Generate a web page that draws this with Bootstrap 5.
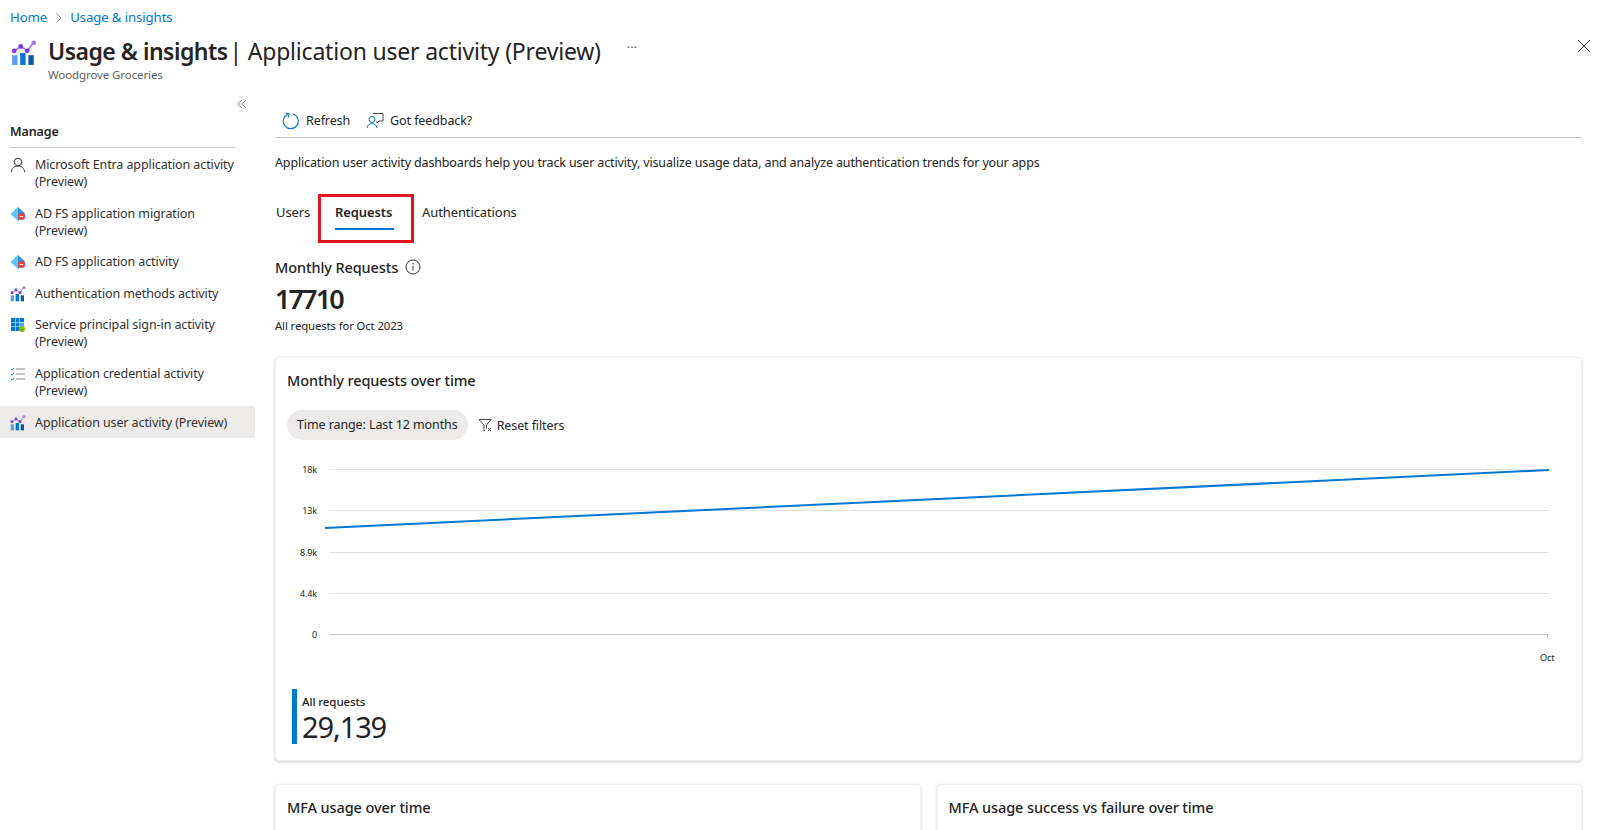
<!DOCTYPE html>
<html lang="en">
<head>
<meta charset="utf-8">
<title>Application user activity</title>
<link href="https://cdn.jsdelivr.net/npm/bootstrap@5.3.0/dist/css/bootstrap.min.css" rel="stylesheet">
<style>
html,body{height:830px;overflow:hidden;background:#fff}
body{font-family:"Noto Sans","Open Sans","Liberation Sans",sans-serif;font-size:12.5px;color:#242424;letter-spacing:-.1px}
a{text-decoration:none}
.crumbs{height:35px;padding:9px 10px 0;font-size:13.2px;line-height:17px}
.crumbs a{color:#0078d4}
.crumbs svg{margin:0 7px 0 8px}
.head{height:55px;padding-left:11px}
.head-ic{margin-right:11px;margin-top:4px}
.head h1{font-size:23px;line-height:32px;margin:0;font-weight:400;letter-spacing:-.2px;color:#242424}
.head h1 b{font-weight:600;letter-spacing:-.5px;margin-right:-4px}
.head-sub{font-size:11.5px;line-height:13px;color:#605e5c;margin-top:1px}
.dots{margin-left:26px;margin-top:6px;color:#605e5c;font-size:13px;line-height:1}
.closer{margin-left:auto;margin-right:12px;margin-top:4px}
.body-row{height:740px;overflow:hidden}
.side{width:255px;flex:none}
.collapse-ic{height:24px;padding-right:8px;padding-top:4px;text-align:right}
.side-head{margin:0 20px 0 10px;height:34px;padding-top:8px;font-weight:600;font-size:12.5px;line-height:20px;border-bottom:1px solid #c8c6c6}
.side-list{margin-top:8px}
.side-item{display:flex;padding:0 10px;color:#323130;line-height:17px;font-size:12.5px;margin-bottom:14.5px}
.side-item svg{flex:none;margin-right:9px;margin-top:1px}
.side-item.on{background:#edebe9;margin-bottom:0;padding-top:8px;padding-bottom:7px;margin-top:-7px}
.main{flex:1;padding-left:20px;padding-right:21px;min-width:0;overflow:hidden}
.tools{height:48px;border-bottom:1px solid #c8c6c6;gap:16px;padding-left:7px;padding-top:14px;width:1307px}
.tools span{display:flex;align-items:center;gap:6px;line-height:17px}
.intro{margin:0;padding-top:16px;line-height:17px;letter-spacing:-.145px}
.tabrow{margin-top:23px;height:49px}
.tab-a{padding:9px 0 0 1px;width:43px;font-size:13px;line-height:18px}
.tab-b{width:96px;border:3px solid #e3141f;padding:6px 0 0 14px;font-weight:600;font-size:13px;line-height:18px;position:relative}
.tab-b::after{content:"";position:absolute;left:14px;top:31px;width:59px;height:2px;background:#0078d4}
.tab-c{padding:9px 0 0 8px;font-size:13px;line-height:18px}
.metric-t{margin-top:14px;font-size:14.500px;line-height:20px;font-weight:500;gap:7px}
.metric-n{font-size:27px;line-height:36px;font-weight:600;margin-top:4px;letter-spacing:-1.9px}
.metric-s{font-size:11.3px;line-height:14px;margin-top:2px}
.panel{background:#fff;border:1px solid #f0f0f0;border-radius:4px;box-shadow:0 1px 3px rgba(0,0,0,.2);padding:12px 11px}
.panel-big{margin-top:24px;height:404px;width:1307px}
.panel-t{font-size:14.500px;line-height:20px;font-weight:500;margin:0}
.filters{margin-top:20px;gap:10px}
.pill{background:#edebe9;border-radius:15px;height:30px;padding:0 10px;line-height:30px;font-size:12.5px}
.reset{gap:4px;line-height:17px;font-size:12.5px}
.chart{display:block;margin:21px 0 0;width:1285px;height:226px}
.chart text{font-family:"Noto Sans","Open Sans",sans-serif;font-size:9px;fill:#242424}
.legend{border-left:5px solid #0078d4;margin-left:5px;padding-left:5px;height:55px;margin-top:2px}
.legend-l{font-size:11.5px;line-height:14px;font-weight:500;padding-top:6px;height:20px}
.legend-n{font-size:29px;line-height:36px;letter-spacing:-1.1px}
.two{gap:16px;margin-top:23px;width:1307px}
.two .panel{flex:1;height:120px}
</style>
</head>
<body>
<svg width="0" height="0" class="position-absolute">
<defs>
<symbol id="ins" viewBox="0 0 24 24">
<rect x="1" y="14" width="5" height="9" fill="#5ea0ef"/><rect x="8.500" y="12" width="5" height="11" fill="#0078d4"/><rect x="16" y="14" width="5" height="9" fill="#0f5aa8"/>
<path d="M3 10 9 6l6 4 6-8" fill="none" stroke="#a67af4" stroke-width="1.5"/><circle cx="3" cy="10" r="2.2" fill="#773adc"/><circle cx="9" cy="6" r="2.2" fill="#773adc"/><circle cx="15" cy="10" r="2.2" fill="#773adc"/><circle cx="21" cy="2.600" r="2.2" fill="#a67af4"/>
</symbol>
<symbol id="adfs" viewBox="0 0 16 16">
<path d="M8 1 .5 8 8 15z" fill="#5cc8f5"/><path d="M8 1l7.500 7L8 15z" fill="#2f8fd8"/><circle cx="11.500" cy="10.500" r="3.600" fill="#e8414b"/><path d="M9.800 10.500h3.400" stroke="#fff" stroke-width="1"/>
</symbol>
</defs>
</svg>

<nav class="crumbs d-flex align-items-start">
<a href="#">Home</a>
<svg width="8" height="17" viewBox="0 0 8 17"><path d="M1.500 4.500 6 9l-4.500 4.500" fill="none" stroke="#8a8886"/></svg>
<a href="#">Usage &amp; insights</a>
</nav>

<header class="head d-flex align-items-start">
<svg class="head-ic" width="26" height="28" viewBox="0 0 24 24"><use href="#ins"/></svg>
<div>
<h1><b>Usage &amp; insights</b> | Application user activity (Preview)</h1>
<div class="head-sub">Woodgrove Groceries</div>
</div>
<div class="dots">···</div>
<svg class="closer" width="14" height="14" viewBox="0 0 14 14"><path d="M1 1l12 12M13 1 1 13" stroke="#323130" fill="none"/></svg>
</header>

<div class="body-row d-flex">
<aside class="side">
<div class="collapse-ic"><svg width="10" height="10" viewBox="0 0 10 10"><path d="M5 1 1 5l4 4M9 1 5 5l4 4" fill="none" stroke="#8a8886"/></svg></div>
<div class="side-head">Manage</div>
<div class="side-list">
<a class="side-item" href="#"><svg width="16" height="16" viewBox="0 0 16 16"><circle cx="8" cy="5" r="3.800" fill="none" stroke="#323130"/><path d="M1.500 15c0-3.500 2.500-6 6.500-6s6.500 2.500 6.500 6" fill="none" stroke="#323130"/></svg><span>Microsoft Entra application activity<br>(Preview)</span></a>
<a class="side-item" href="#"><svg width="16" height="16"><use href="#adfs"/></svg><span>AD FS application migration<br>(Preview)</span></a>
<a class="side-item" href="#"><svg width="16" height="16"><use href="#adfs"/></svg><span>AD FS application activity</span></a>
<a class="side-item" href="#"><svg width="16" height="16"><use href="#ins"/></svg><span>Authentication methods activity</span></a>
<a class="side-item" href="#"><svg width="16" height="16" viewBox="0 0 16 16"><rect x="1" y="1" width="4" height="4" fill="#0078d4"/><rect x="5.500" y="1" width="4" height="4" fill="#0078d4"/><rect x="10" y="1" width="4" height="4" fill="#0078d4"/><rect x="1" y="5.500" width="4" height="4" fill="#0078d4"/><rect x="5.500" y="5.500" width="4" height="4" fill="#0078d4"/><rect x="10" y="5.500" width="4" height="4" fill="#5ea0ef"/><rect x="1" y="10" width="4" height="4" fill="#0078d4"/><rect x="5.500" y="10" width="4" height="4" fill="#0078d4"/><circle cx="12" cy="12" r="3" fill="#7fba00"/></svg><span>Service principal sign-in activity<br>(Preview)</span></a>
<a class="side-item" href="#"><svg width="16" height="16" viewBox="0 0 16 16"><path d="M1 3l1.200 1.200L4 2M1 8l1.200 1.200L4 7M1 13l1.200 1.200L4 12" fill="none" stroke="#0078d4"/><path d="M6 3h9M6 8h9M6 13h9" stroke="#8a8886"/></svg><span>Application credential activity<br>(Preview)</span></a>
<a class="side-item on" href="#"><svg width="16" height="16"><use href="#ins"/></svg><span>Application user activity (Preview)</span></a>
</div>
</aside>

<main class="main">
<div class="tools d-flex align-items-center">
<span><svg width="18" height="18" viewBox="0 0 18 18"><path d="M6 2.200A7.500 7.500 0 1 0 11 2" fill="none" stroke="#0078d4" stroke-width="1.100"/><path d="M2.500 1.500 6 2.200 5.500 6" fill="none" stroke="#0078d4" stroke-width="1.100" transform="translate(1 -.5)"/></svg>Refresh</span>
<span><svg width="18" height="18" viewBox="0 0 18 18"><circle cx="6" cy="7.500" r="3" fill="none" stroke="#0078d4"/><path d="M1 16c.5-3 2.500-4.500 5-4.500s4.500 1.500 5 4.500" fill="none" stroke="#0078d4"/><path d="M7 1.500h10V9h-4l-2 2V9" fill="none" stroke="#323130" stroke-width=".9"/></svg>Got feedback?</span>
</div>
<p class="intro">Application user activity dashboards help you track user activity, visualize usage data, and analyze authentication trends for your apps</p>

<div class="tabrow d-flex">
<div class="tab-a">Users</div>
<div class="tab-b">Requests</div>
<div class="tab-c">Authentications</div>
</div>

<div class="metric-t d-flex align-items-center">Monthly Requests
<svg width="16" height="16" viewBox="0 0 16 16"><circle cx="8" cy="8" r="7" fill="none" stroke="#323130"/><path d="M8 7v4.500" stroke="#323130"/><circle cx="8" cy="4.800" r=".8" fill="#323130"/></svg></div>
<div class="metric-n">17710</div>
<div class="metric-s">All requests for Oct 2023</div>

<section class="panel panel-big">
<h2 class="panel-t">Monthly requests over time</h2>
<div class="filters d-flex align-items-center">
<div class="pill">Time range: Last 12 months</div>
<div class="reset d-flex align-items-center"><svg width="15" height="15" viewBox="0 0 15 15"><path d="M1 1.500h12L8.500 7v3.500M1 1.500 6 7v6l1-.6" fill="none" stroke="#323130" stroke-width=".9"/><path d="M10 10l3 3M13 10l-3 3" stroke="#323130" stroke-width=".9"/></svg>Reset filters</div>
</div>
<svg class="chart" viewBox="0 0 1285 226">
<path d="M42.500 8.500H1261.500M42.500 49.500H1261.500M42.500 91.500H1261.500M42.500 132.500H1261.500" stroke="#e1e1e1"/>
<path d="M42.500 173.500H1261.500M1260.500 173.500v4" stroke="#c8c6c4"/>
<path d="M38 67 1262 9" stroke="#0078d4" stroke-width="2" fill="none"/>
<g text-anchor="end"><text x="30" y="12">18k</text><text x="30" y="53">13k</text><text x="30" y="95">8.9k</text><text x="30" y="136">4.4k</text><text x="30" y="177">0</text></g>
<text x="1253" y="200">Oct</text>
</svg>
<div class="legend">
<div class="legend-l">All requests</div>
<div class="legend-n">29,139</div>
</div>
</section>

<div class="two d-flex">
<section class="panel"><h2 class="panel-t">MFA usage over time</h2></section>
<section class="panel"><h2 class="panel-t">MFA usage success vs failure over time</h2></section>
</div>
</main>
</div>
</body>
</html>
